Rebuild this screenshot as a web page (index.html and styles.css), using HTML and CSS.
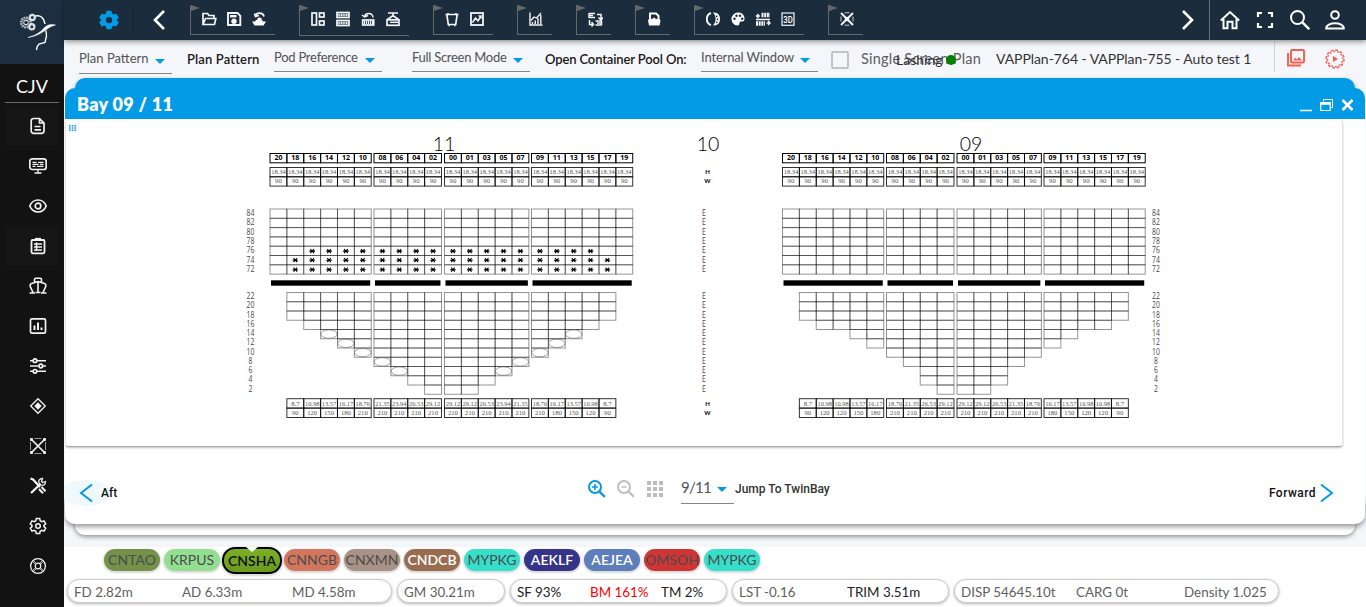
FILE: index.html
```html
<!DOCTYPE html>
<html lang="en">
<head>
<meta charset="utf-8">
<title>Bay 09 / 11</title>
<link rel="stylesheet" href="styles.css">
</head>
<body>
<div class="app">
  <aside class="side">
    <div class="logo">
      <svg width="64" height="64" viewBox="0 0 64 64" fill="none" stroke="#fff">
        <circle cx="26" cy="22.500" r="4.700" stroke="#aab0b6" stroke-width="2.800" stroke-dasharray="1.800 .6"/>
        <circle cx="32.300" cy="17.500" r="2.600" stroke="#dde0e3" stroke-width="2.200"/>
        <circle cx="31.800" cy="26.800" r="2.600" stroke="#dde0e3" stroke-width="2.200"/>
        <circle cx="26" cy="22.500" r="2.300" stroke="#fff" stroke-width="1"/>
        <path d="M35.500 16c5-1 8.500 1.500 9.500 8" stroke-width="1.400"/>
        <path d="M28 37.500c6-1.500 12-4.500 16-9.500 3-3 6.500-4.500 11.500-3-6 1.500-8.500 4.500-12 6.500-5 3.500-10 5-15.500 6z" fill="#fff" stroke-width=".5"/>
        <path d="M46 30.500l.5 5.500-1.500 6.500-6 1.500-1.800 2.500-.7 3.500" stroke-width="1.400"/>
      </svg>
    </div>
    <div class="vessel">CJV</div>
    <nav class="side-nav">
      <a class="on"><svg viewBox="0 0 18 18"><path d="M4.500 1.500h6l4.500 4.500v8a2.300 2.300 0 0 1-2.300 2.300H4.500A2.300 2.300 0 0 1 2.200 14V3.800a2.300 2.300 0 0 1 2.300-2.300zM10.500 1.500V6H15M5.500 9.500h6M5.500 12.800h6.500"/></svg></a>
      <a><svg viewBox="0 0 18 18"><rect x=".8" y="1.800" width="16.400" height="10.700" rx="2.500"/><path d="M3.500 5.300h4M9 5.300h5.500M3.500 7.300h6M11 7.300h3.500M3.500 9.300h3M8 9.300h6.500M9 12.500V16M5.500 16h7" stroke-width="1.300"/></svg></a>
      <a><svg viewBox="0 0 18 18"><path d="M.8 9C4 1 14 1 17.200 9 14 17 4 17 .8 9z"/><circle cx="9" cy="9" r="2.800"/></svg></a>
      <a class="on"><svg viewBox="0 0 18 18"><rect x="2.500" y="3" width="13" height="13.300" rx="1.200" stroke-width="1.800"/><path d="M6 2.200h6" stroke-width="2.600"/><path d="M5 7h8M5 10h8M5 13h8M7.500 5.500V14" stroke-width="1.500"/></svg></a>
      <a><svg viewBox="0 0 18 18"><path d="M5.500 5V2.500q0-1.200 1.200-1.200h4.600q1.200 0 1.200 1.200V5M2.500 6.500L9 4.500l6.500 2c2 .7 1.500 2.500 1 3.500-.8 2-1.500 3.500-2.500 5.300M2.500 6.500c-2 .7-1.500 2.500-1 3.500.8 2 1.500 3.500 2.500 5.300M9 4.500V15M.5 16h5.500M6.500 15.500h5M12 16h5.500" stroke-width="1.600"/></svg></a>
      <a><svg viewBox="0 0 18 18"><rect x="1.500" y="1.800" width="15" height="14.400" rx="1.500"/><path d="M5.500 8.500V13M9 5.500V13M12.500 10.500V13" stroke-width="2"/></svg></a>
      <a><svg viewBox="0 0 18 18"><path d="M1 3.700h3M8 3.700h9M1 9h8.500M14 9h3M1 14.300h3M8 14.300h9" stroke-width="1.400"/><circle cx="6" cy="3.700" r="1.800"/><circle cx="11.800" cy="9" r="1.800"/><circle cx="6" cy="14.300" r="1.800"/></svg></a>
      <a><svg viewBox="0 0 18 18"><path d="M9 1.700L16.300 9 9 16.300 1.700 9z" stroke-width="1.300"/><path d="M9 6.500L11.500 9 9 11.500 6.500 9z" fill="#fff"/></svg></a>
      <a><svg viewBox="0 0 18 18"><path d="M2 2l14 14M16 2L2 16" stroke-width="1.700"/><path d="M1.500 5v8M16.500 5v8M5.500 1.500h7M5.500 16.500h7" stroke-width="1" stroke="#999"/><path d="M1 2.500h3M2.500 1v3M14 2.500h3M15.500 1v3M1 15.500h3M2.500 14v3M14 15.500h3M15.500 14v3" stroke-width="1.800"/></svg></a>
      <a><svg viewBox="0 0 18 18"><path d="M1.500 1.500l2.500 1L11 10M2 16l9.500-9" stroke-width="2.300"/><path d="M16.500 4.500l-3 1-1-1 1-3c-3 0-4.500 2-3.500 4.500l2 2c2.500 1 4.500-.5 4.500-3.500z" stroke-width="1.300"/><path d="M10 12l4 4.200M12.500 10l4 4.200" stroke-width="2"/></svg></a>
      <a><svg viewBox="0 0 18 18"><path d="M7.300 1.500h3.400l.5 2.200 1.600.9 2.200-.7 1.700 3-1.700 1.500v1.200l1.700 1.500-1.700 3-2.200-.7-1.600.9-.5 2.200H7.300l-.5-2.200-1.600-.9-2.200.7-1.700-3L3 9.600V8.400L1.300 6.900l1.700-3 2.200.7 1.600-.9z" stroke-width="1.500"/><circle cx="9" cy="9" r="2.300" stroke-width="1.500"/></svg></a>
      <a><svg viewBox="0 0 18 18"><circle cx="9" cy="9" r="7.400" stroke-width="1.300"/><circle cx="9" cy="9" r="2.800" stroke-width="1.200"/><path d="M3.800 4.600l3 3M4.600 3.800l3 3M14.200 4.600l-3 3M13.400 3.800l-3 3M3.800 13.400l3-3M4.600 14.200l3-3M14.200 13.400l-3-3M13.400 14.200l-3-3" stroke-width=".8"/></svg></a>
    </nav>
  </aside>

  <main class="main">
    <header class="topbar">
      <div class="gear"><svg width="20" height="20" viewBox="0 0 24 24" fill="#039be5"><path fill-rule="evenodd" d="M9 1h6l.7 3.300 2 1.100 3.200-1 2.900 5-2.400 2.200v1l2.400 2.200-2.900 5-3.200-1-2 1.100L15 23H9l-.7-3.100-2-1.100-3.200 1-2.900-5 2.400-2.200v-1L.2 9.400l2.900-5 3.200 1 2-1.100zM12 8.300a3.800 3.800 0 1 0 0 7.600 3.800 3.800 0 0 0 0-7.600z"/></svg></div>
      <svg class="prev" width="14" height="20" viewBox="0 0 14 20" fill="none" stroke="#fff" stroke-width="2.600"><path d="M12 1L3 10l9 9"/></svg>
      <div class="tools">
        <div class="tool-group">
          <svg viewBox="0 0 16 16"><path d="M2 13.500v-11h4.500l1.500 2h5v2.500M2 13.500L4.500 7.500h10.300l-1.300 6z"/></svg>
          <svg viewBox="0 0 16 16"><path d="M2 2h9.500l2.800 2.800V14H2z" stroke-width="1.900"/><path d="M4 5.200h6.500" stroke-width="2.400"/><circle cx="8" cy="10.300" r="1.900" fill="#fff"/></svg>
          <svg viewBox="0 0 16 16"><path d="M4.500 5C5.500 1.200 12 1.200 13 5.500M8 4.500L4.500 5.500 3.500 2.500"/><path d="M5 9h6l1 1.500h3l-2.500 4h-9L1 10.500h3z" fill="#fff" stroke="none"/><circle cx="8.500" cy="8.800" r="2.300" fill="#fff" stroke="none"/></svg>
        </div>
        <div class="tool-group tall">
          <svg viewBox="0 0 16 16"><rect x="2" y="2" width="4.500" height="12"/><rect x="9.500" y="2" width="4.500" height="4"/><rect x="9.500" y="10" width="4.500" height="4"/></svg>
          <svg viewBox="0 0 16 16"><rect x="2" y="1.500" width="12" height="5"/><rect x="2" y="9.500" width="12" height="5"/><path d="M2.500 4h11M2.500 12h11" stroke-width="2.600" stroke-dasharray="1.200 .5"/></svg>
          <svg viewBox="0 0 16 16"><path d="M4.500 6C5 1.500 12.500 1 13 6.500M2 4l2.500 2L8 4.500" stroke-width="1.500"/><rect x="2.700" y="9" width="11" height="5"/><path d="M4 11.500h9" stroke-width="3" stroke-dasharray="1.200 .8"/></svg>
          <svg viewBox="0 0 16 16"><path d="M3 2h10M8 2v3M2.500 8.500L8 4.500l5.500 4"/><rect x="2" y="8.800" width="12" height="5.500"/><path d="M5 11.300h8" stroke-width="1.500"/></svg>
        </div>
        <div class="tool-group">
          <svg viewBox="0 0 16 16"><path d="M1.500 3.500h13M2.800 3.500L4.300 13.500h7.400l1.500-10M4.500 14.300h1.500M10 14.300h1.500M4 3V2M12 3V2"/></svg>
          <svg viewBox="0 0 16 16"><rect x="2" y="2" width="12" height="12" stroke-width="1.800"/><path d="M3.500 11.500L6.500 7l2.500 3L12 5M9.500 5H12v2.500" stroke-width="1.500"/></svg>
        </div>
        <div class="tool-group">
          <svg viewBox="0 0 16 16"><path d="M2 1.500V14h12.500M4.500 13v-2M7.300 13V9.500M10 13V7M12.800 13V4" stroke-width="1.400"/><path d="M3 9.500L6 6l2.500 1L13 2" stroke-width="1.300"/></svg>
        </div>
        <div class="tool-group">
          <svg viewBox="0 0 16 16"><path d="M2 2.500h6M2 4.500h4M2 6.500h6M2 2v5M10 3.500h4V8M11.500 6.500L14 9l2-2.500M8.500 10h6M10 12h4M8.500 14h6M14.500 9.500v5M2.500 9v4.500h4M4.500 11l2 2.500-2 2" stroke-width="1.500"/></svg>
        </div>
        <div class="tool-group">
          <svg viewBox="0 0 16 16"><path fill-rule="evenodd" stroke="none" fill="#fff" d="M3 1.500h7.500l3 3V8l1 1.500-1 5H3l-1-5L3 8zm2 2v4.500h1l2-1.500L10 8h1.500V5.200L9.700 3.500z"/></svg>
        </div>
        <div class="tool-group">
          <svg viewBox="0 0 16 16"><path d="M6 2C.5 3.500.5 12.500 6 14" stroke-width="1.900"/><path fill-rule="evenodd" d="M8 1.500c6-.5 7 4 7 6.500s-1 7-7 6.500c3.500-3.500 3.500-9.500 0-13zm3.700 3a.8.800 0 1 0 .1 0zm.8 3a.8.800 0 1 0 .1 0zm-.8 3a.8.800 0 1 0 .1 0z" fill="#fff" stroke="none"/></svg>
          <svg viewBox="0 0 16 16"><path fill="#fff" stroke="none" d="M8 1.500A6.500 6.500 0 0 0 1.500 8c0 3.500 2.500 6.500 6 6.500 3 0 1-3 3-4h2.500c3-1 2-9-5-9z"/><g fill="#1b2c3d" stroke="none"><circle cx="4.500" cy="7.800" r="1.200"/><circle cx="6.500" cy="4.700" r="1.200"/><circle cx="10" cy="4.700" r="1.200"/><circle cx="12.200" cy="7.800" r="1.200"/></g></svg>
          <svg viewBox="0 0 16 16"><path d="M6.500 4H15M1 12.500h9" stroke-width="4.500" stroke-dasharray="2 .7"/><path d="M1 5h4M3.500 3L1.500 5l2 2M1 8.500h14M11.500 12h4M13 10l2 2-2 2" stroke-width="1.400"/></svg>
          <svg viewBox="0 0 16 16"><rect x="2" y="2" width="12" height="12.300" stroke-width="1.200"/><text x="8" y="11.500" font-family="Roboto" font-weight="500" font-size="9" fill="#fff" stroke="none" text-anchor="middle" textLength="9.500" lengthAdjust="spacingAndGlyphs">3D</text></svg>
        </div>
        <div class="tool-group">
          <svg viewBox="0 0 16 16"><path d="M2 2l12 12M14 2L2 14" stroke-width="1.900"/><circle cx="8" cy="8" r="2.300" fill="#fff" stroke="none"/><path d="M2 5.500v5M14 5.500v5M5.500 1.800h5M5.500 14.200h5" stroke-width=".8"/></svg>
        </div>
      </div>
      <svg class="next" width="14" height="20" viewBox="0 0 14 20" fill="none" stroke="#fff" stroke-width="2.600"><path d="M2 1l9 9-9 9"/></svg>
      <div class="user-tools">
        <svg width="20" height="20" viewBox="0 0 20 20"><path d="M.8 10.500L10 2l9.200 8.500M3.500 9v9.200h4v-6.500h5v6.500h4V9" stroke-width="2"/></svg>
        <svg width="20" height="20" viewBox="0 0 20 20"><path d="M3 7V3h4M13 3h4v4M17 13v4h-4M7 17H3v-4" stroke-width="2.200"/></svg>
        <svg width="20" height="20" viewBox="0 0 20 20"><circle cx="7.500" cy="7.500" r="6.500" stroke-width="2"/><path d="M12.200 12.200l7 7" stroke-width="2.400"/></svg>
        <svg width="20" height="20" viewBox="0 0 20 20"><circle cx="10" cy="5" r="3.800" stroke-width="2"/><path d="M1.200 18.500c0-7 17.600-7 17.600 0z" stroke-width="2"/></svg>
      </div>
    </header>

    <section class="filters">
      <div class="select s-plan"><span>Plan Pattern</span><i></i></div>
      <b class="lab l-plan">Plan Pattern</b>
      <div class="select s-pod"><span>Pod Preference</span><i></i></div>
      <div class="select s-full"><span>Full Screen Mode</span><i></i></div>
      <b class="lab l-pool">Open Container Pool On:</b>
      <div class="select s-win"><span>Internal Window</span><i></i></div>
      <span class="check"></span>
      <div class="single"><span>Single Screen Plan</span><div class="lashing"><span>Lashing</span><i></i></div></div>
      <span class="plan-name">VAPPlan-764 - VAPPlan-755 - Auto test 1</span>
      <div class="right-icons">
        <svg width="18" height="18" viewBox="0 0 18 18" fill="none" stroke="#f44336"><rect x="4" y="1" width="13" height="12.500" rx="1" stroke-width="1.900"/><path d="M1 4v12.500h13" stroke-width="1.900"/><path d="M6 11.500l2.500-3 1.500 2 2-2.500 3 3.500z" fill="#f44336" stroke="none"/></svg>
        <svg width="20" height="20" viewBox="0 0 20 20" fill="none" stroke="#f44336"><circle cx="10" cy="10" r="9" stroke-width="1.500" stroke-dasharray="2.700 2.012"/><circle cx="10" cy="10" r="7.600" stroke-width="1.300" stroke-dasharray="1.990 1.989" stroke-dashoffset="-2"/><path d="M8 7l5 3-5 3z" fill="#f44336" stroke="none"/></svg>
      </div>
    </section>

    <section class="stage">
      <div class="win-back"></div>
      <div class="win">
        <div class="win-head">
          <h1>Bay 09 / 11</h1>
          <div class="win-btns">
            <svg width="12" height="14" viewBox="0 0 12 14"><path d="M0 12.500h12" stroke-width="1.700"/></svg>
            <svg width="13" height="14" viewBox="0 0 13 14"><path d="M3.500 3.500V1.500h9v8h-2" stroke-width="1"/><path d="M.7 4.500h9.500v8H.7z" stroke-width="1.200"/><path d="M.7 5.500h9.500" stroke-width="2.500"/></svg>
            <svg width="13" height="14" viewBox="0 0 13 14"><path d="M1.500 2l10 10M11.500 2l-10 10" stroke-width="2.700"/></svg>
          </div>
        </div>
        <div class="plan"><svg id="bay" width="1276" height="327" viewBox="66 119 1276 327"></svg></div>
        <div class="win-foot">
          <div class="aft"><svg width="14" height="20" viewBox="0 0 14 20" fill="none" stroke="#039be5" stroke-width="2"><path d="M13 1.500L2 10l11 8.500"/></svg><b>Aft</b></div>
          <div class="zoomers">
            <svg width="20" height="20" viewBox="0 0 20 20" fill="none" stroke="#0b97dd"><circle cx="8" cy="8" r="6" stroke-width="2"/><path d="M12.300 12.300l5.500 5.500" stroke-width="2.400"/><path d="M8 5v6M5 8h6" stroke-width="1.600"/></svg>
            <svg width="20" height="20" viewBox="0 0 20 20" fill="none" stroke="#bdbdbd"><circle cx="8" cy="8" r="6" stroke-width="1.900"/><path d="M12.300 12.300l5.500 5.500" stroke-width="2.300"/><path d="M5.500 8h5" stroke-width="1.500"/></svg>
            <svg width="16" height="16" viewBox="0 0 16 16" stroke="#bdbdbd" stroke-width="4"><path d="M0 2h16M0 8h16M0 14h16" stroke-dasharray="4 2"/></svg>
          </div>
          <div class="select s-bay"><span>9/11</span><i></i></div>
          <b class="jump">Jump To TwinBay</b>
          <div class="fwd"><b>Forward</b><svg width="14" height="20" viewBox="0 0 14 20" fill="none" stroke="#039be5" stroke-width="2"><path d="M1 1.500L12 10 1 18.500"/></svg></div>
        </div>
      </div>
    </section>

    <footer class="foot">
      <div class="chips">
        <span class="chip olive">CNTAO</span><span class="chip lime">KRPUS</span><span class="chip current">CNSHA</span><span class="chip coral">CNNGB</span><span class="chip taupe">CNXMN</span><span class="chip brown light">CNDCB</span><span class="chip teal">MYPKG</span><span class="chip navy light">AEKLF</span><span class="chip blue light">AEJEA</span><span class="chip red">OMSOH</span><span class="chip teal">MYPKG</span>
      </div>
      <div class="stats">
        <div class="stat draft"><span>FD 2.82m</span><span>AD 6.33m</span><span>MD 4.58m</span></div>
        <div class="stat gm"><span>GM 30.21m</span></div>
        <div class="stat stress"><span class="dark">SF 93%</span><span class="alert">BM 161%</span><span class="dark">TM 2%</span></div>
        <div class="stat trim"><span>LST -0.16</span><span class="dark">TRIM 3.51m</span></div>
        <div class="stat load"><span>DISP 54645.10t</span><span>CARG 0t</span><span>Density 1.025</span></div>
      </div>
    </footer>
  </main>
</div>
<script src="bay.js"></script>
</body>
</html>
```

FILE: styles.css
```css
* { box-sizing: border-box; }
body { margin: 0; font-family: Lato, "Open Sans", sans-serif; color: #333; background: #fff; overflow: hidden; }
svg { display: block; flex: none; }
.app { display: flex; width: 1366px; height: 607px; }

.side { width: 64px; flex: none; background: #121212; }
.logo { height: 64px; background: #1c2e40; }
.vessel { height: 39px; margin: 0 5px; padding-top: 11px; border-bottom: 1px solid #666c72; color: #fff; font-size: 18px; line-height: 22px; text-align: center; }
.side-nav { margin: 3px 5px 0; }
.side-nav a { display: flex; height: 40px; align-items: center; justify-content: center; padding-left: 12px; }
.side-nav a.on { background: #161616; }
.side-nav svg { width: 18px; height: 18px; fill: none; stroke: #f2f2f2; stroke-width: 1.7; }

.main { flex: 1; min-width: 0; display: flex; flex-direction: column; background: #f5f6f9; }
.topbar { height: 40px; flex: none; display: flex; align-items: center; background: #1b2c3d; box-shadow: 0 2px 5px rgba(0,0,0,.4); z-index: 2; }
.gear { width: 70px; height: 32px; padding: 6px 0 0 35px; border-right: 1px solid #17222e; }
.prev { margin-left: 18px; }
.tools { display: flex; align-items: flex-start; gap: 24px; height: 30px; margin-left: 24px; }
.tool-group { position: relative; display: flex; gap: 9px; height: 30px; padding: 6px 8.500px 0 9.500px; border-left: 1px solid #686868; border-bottom: 1px solid #686868; }
.tool-group.tall { height: 31px; }
.tool-group::before { content: ""; position: absolute; left: 0; top: 0; border-left: 9px solid #666; border-top: 3px solid transparent; border-bottom: 3px solid transparent; }
.tool-group svg { width: 16px; height: 16px; fill: none; stroke: #f4f6f8; stroke-width: 1.7; }
.next { margin-left: 318px; }
.user-tools { display: flex; align-items: center; gap: 15px; height: 40px; margin-left: 14px; padding-left: 10px; border-left: 1px solid #68727c; }
.user-tools svg { fill: none; stroke: #fff; }

.filters { display: flex; height: 38px; flex: none; padding-left: 15px; }
.select { display: flex; flex: none; justify-content: space-between; border-bottom: 1px solid #868686; font-size: 13px; line-height: 16px; color: #505356; white-space: nowrap; }
.select i { width: 0; height: 0; border: 5px solid transparent; border-top-color: #039be5; border-bottom: 0; }
.filters .select { height: 32px; padding-top: 9px; }
.filters .select i { margin: 9px 7px 0 0; }
.filters .s-plan { width: 93px; height: 34px; padding-top: 10px; }
.s-pod { width: 108px; margin-left: 15px; letter-spacing: -.25px; }
.s-full { width: 118px; margin-left: 30px; letter-spacing: -.28px; }
.s-win { width: 117px; margin-left: 14px; letter-spacing: -.15px; }
.filters .s-win i { margin-right: 8px; }
.lab { font-size: 13px; line-height: 16px; padding-top: 11px; color: #181818; font-weight: 600; white-space: nowrap; flex: none; }
.l-plan { width: 72px; margin-left: 15px; letter-spacing: .15px; }
.l-pool { width: 142px; margin-left: 15px; letter-spacing: -.13px; }
.check { flex: none; width: 18px; height: 18px; margin: 11px 0 0 13px; border: 2px solid #c2c3c5; border-radius: 2px; }
.single { position: relative; flex: none; width: 121px; margin-left: 12px; padding-top: 10px; font-size: 14.500px; line-height: 18px; letter-spacing: .23px; white-space: nowrap; color: #5a5d60; }
.lashing { position: absolute; left: 35px; top: 11px; display: flex; align-items: center; color: #333; font-size: 14px; letter-spacing: 0; }
.lashing span { width: 50px; }
.lashing i { width: 10px; height: 10px; border-radius: 50%; background: #008000; }
.plan-name { flex: none; width: 278px; margin-left: 14px; padding-top: 10px; font-size: 14px; line-height: 17px; letter-spacing: -.06px; white-space: nowrap; }
.right-icons { display: flex; gap: 20px; height: 30px; margin-top: 2px; padding: 7px 0 0 12px; border-left: 1px solid #ccced1; opacity: .85; }

.stage { position: relative; height: 469px; flex: none; }
.win-back { position: absolute; left: 11px; top: 0; width: 1280px; height: 457px; border-radius: 10px; background: linear-gradient(#039be5 30px, #fff 30px); box-shadow: 0 2px 4px rgba(0,0,0,.4); }
.win { position: absolute; z-index: 2; left: 1px; top: 10px; width: 1300px; height: 436px; border-radius: 10px; overflow: hidden; background: #fff; display: flex; flex-direction: column; }
.stage::before { content: ""; position: absolute; z-index: 1; left: 1px; top: 420px; width: 1300px; height: 26px; border-radius: 0 0 10px 10px; box-shadow: 0 3px 5px rgba(0,0,0,.38); }
.win-head { display: flex; justify-content: space-between; height: 31px; flex: none; padding: 0 11px 0 12px; background: #039be5; color: #fff; }
.win-head h1 { margin: 0; padding-top: 5px; font-size: 18px; line-height: 22px; font-weight: 800; letter-spacing: .3px; }
.win-btns { display: flex; gap: 8px; padding-top: 10px; }
.win-btns svg { fill: none; stroke: #fff; }
.plan { width: 1278px; height: 328px; flex: none; border-radius: 4px; border: 1px solid #e3e3e3; border-top: 0; border-bottom-color: #aaa; box-shadow: 0 1px 2px rgba(0,0,0,.25); }
.plan text { font-family: Lato, sans-serif; }
.plan .serif { font-family: "Liberation Serif", serif; fill: #555; }
.plan .bold { font-family: "Open Sans", sans-serif; font-weight: 700; }
.plan .axis { font-family: "Open Sans", sans-serif; font-size: 8.500px; fill: #444; }
.win-foot { display: flex; flex: 1; font-size: 12px; }
.win-foot b { font-family: Roboto, "Open Sans", sans-serif; font-weight: 500; color: #111; white-space: nowrap; }
.aft { display: flex; align-items: center; gap: 8px; width: 508px; height: 40px; margin-top: 26px; padding-left: 14px; background: radial-gradient(ellipse 26px 13px at 21px 20px, #eef8fd 96%, transparent); }
.zoomers { display: flex; gap: 9px; padding: 32px 0 0 14px; width: 108px; }
.zoomers svg:nth-child(3) { margin: 2px 0 0 2px; }
.s-bay { width: 53px; height: 25px; margin-top: 32px; font-size: 15px; line-height: 16px; letter-spacing: -.7px; }
.s-bay { height: 25px; }
.s-bay i { margin: 8px 7px 0 0; }
.win-foot .jump { margin: 35px 0 0 1px; line-height: 15px; color: #333; }
.fwd { display: flex; align-items: center; gap: 4px; margin: 26px 31px 0 auto; height: 40px; }
.fwd b { letter-spacing: .45px; }

.foot { flex: 1; background: #fff; }
.chips { display: flex; align-items: center; gap: 4px; height: 26px; padding-left: 40px; }
.chip { position: relative; display: flex; justify-content: center; width: 56px; height: 22px; border-radius: 11px; font-size: 14px; line-height: 22px; color: #4c4c4c; box-shadow: 0 1px 2px 1px rgba(0,0,0,.15); white-space: nowrap; }
.chip.light { color: #fff; font-weight: 600; }
.chip.current { width: 60px; height: 27px; margin: 0 -2px; border: 2px solid #000; border-radius: 13px; background: linear-gradient(#7bb026, #6b9a1d); line-height: 24px; color: #111; font-weight: 600; z-index: 1; }
.chip.current::before { content: ""; position: absolute; left: 22px; top: -2px; border: 6px solid transparent; border-top: 5px solid #fff; border-bottom: 0; }
.olive { background: #75924a; }
.lime { background: #93df92; }
.coral { background: #d2775e; }
.taupe { background: #a89386; }
.brown { background: #996c50; }
.teal { background: #36dfc9; }
.navy { background: #353489; }
.blue { background: #5e7dbb; }
.red { background: #d03535; }
.stats { display: flex; gap: 5px; padding: 6px 0 0 3px; }
.stat { display: grid; height: 24px; padding-left: 6px; border: 1px solid #ccc; border-radius: 12px; background: #fff; font-size: 13.400px; line-height: 24px; color: #606060; box-shadow: 0 1px 3px rgba(0,0,0,.3); white-space: nowrap; }
.draft { width: 325px; grid-template-columns: 108px 110px 1fr; }
.gm { width: 108px; }
.stress { width: 217px; grid-template-columns: 73px 71px 1fr; }
.trim { width: 217px; grid-template-columns: 108px 1fr; }
.load { width: 325px; grid-template-columns: 115px 108px 1fr; }
.stat .dark { color: #222; }
.stat .alert { color: #f00; }
```

FILE: bay.js
```js
const svg = document.getElementById("bay");
const NS = "http://www.w3.org/2000/svg";
function add(tag, attrs, text) {
  const el = document.createElementNS(NS, tag);
  for (const k in attrs) el.setAttribute(k, attrs[k]);
  if (text !== undefined) el.textContent = text;
  svg.appendChild(el);
}
const CW = 16.87, RH = 9.3;
const groups = [[0, 6], [104, 4], [174.500, 5], [261.500, 6]];
const colX = [];
groups.forEach(([x, n]) => { for (let i = 0; i < n; i++) colX.push(x + i * CW); });
const heads = "20 18 16 14 12 10 08 06 04 02 00 01 03 05 07 09 11 13 15 17 19".split(" ");
const upper = [84, 82, 80, 78, 76, 74, 72];
const lower = [22, 20, 18, 16, 14, 12, 10, 8, 6, 4, 2];
const bays = [
  { x: 270, name: "11", nameX: 444, labelX: 250.500, stars: { 76: [2, 18], 74: [1, 19], 72: [1, 19] }, oval: true,
    hold: [[1, 19], [1, 19], [1, 19], [2, 18], [3, 17], [4, 16], [5, 15], [6, 14], [7, 13], [8, 12], [9, 11]],
    h: "8.7 10.98 13.57 16.17 18.76 21.35 23.94 26.53 29.12 29.12 29.12 26.53 23.94 21.35 18.76 16.17 13.57 10.98 8.7",
    w: "90 120 150 180 210 210 210 210 210 210 210 210 210 210 210 180 150 120 90" },
  { x: 782.500, name: "09", nameX: 971, labelX: 1156, stars: {}, oval: false,
    hold: [[1, 19], [1, 19], [1, 19], [2, 18], [4, 16], [5, 15], [6, 14], [7, 13], [8, 12], [8, 12], [9, 11]],
    h: "8.7 10.98 10.98 13.57 16.17 18.76 21.35 26.53 29.12 29.12 29.12 26.53 21.35 18.76 16.17 13.57 10.98 10.98 8.7",
    w: "90 120 120 150 180 210 210 210 210 210 210 210 210 210 180 150 120 120 90" }
];
function cell(x, y, h, stroke) {
  add("rect", { x, y, width: CW, height: h, fill: "none", stroke, "stroke-width": 1 });
}
const SLOT = "rgba(0,0,0,.42)", HEAD = "#000", VALUE = "rgba(0,0,0,.8)";
function value(x, y, t) {
  const a = { x: x + CW / 2, y, "font-size": 6.700, "text-anchor": "middle", class: "serif" };
  if (t.length > 4) { a.textLength = 14.500; a.lengthAdjust = "spacingAndGlyphs"; }
  add("text", a, t);
}
function axis(x, y, t) {
  const s = String(t);
  add("text", { x, y, "text-anchor": "middle", class: "axis", textLength: s === "E" ? 3.800 : s.length * 3.900, lengthAdjust: "spacingAndGlyphs" }, s);
}
bays.forEach(b => {
  add("text", { x: b.nameX, y: 151, "font-size": 19.500, "font-weight": 300, "text-anchor": "middle" }, b.name);
  heads.forEach((t, i) => {
    const x = b.x + colX[i];
    cell(x, 153.500, 9.300, HEAD);
    add("text", { x: x + CW / 2, y: 160.300, "font-size": 7, "text-anchor": "middle", class: "bold" }, t);
    cell(x, 167.500, 9.300, VALUE);
    cell(x, 176.800, 9.300, VALUE);
    value(x, 174.300, "18.34");
    value(x, 183.300, "90");
  });
  upper.forEach((n, r) => {
    const y = 209 + r * RH;
    heads.forEach((t, i) => cell(b.x + colX[i], y, RH, SLOT));
    axis(b.labelX, y + 7, n);
    const s = b.stars[n];
    if (s) for (let i = s[0]; i <= s[1]; i++) {
      const cx = b.x + colX[i] + CW / 2, cy = y + 4.900 - r % 2 * .2;
      add("path", { d: `M${cx - 2.8} ${cy}h5.600M${cx - 1.8} ${cy - 2}l3.600 4M${cx + 1.8} ${cy - 2}l-3.600 4`, stroke: "#000", "stroke-width": 1.05 });
    }
  });
  groups.forEach(([x, n]) => add("rect", { x: b.x + x + 1, y: 280.300, width: n * CW - 2, height: 5.400, fill: "#000" }));
  lower.forEach((n, r) => {
    const y = 292.500 + r * 9.250, [s, e] = b.hold[r];
    for (let i = s; i <= e; i++) {
      cell(b.x + colX[i], y, 9.250, SLOT);
      if (b.oval && r > 3 && r < 9 && (i === s || i === e))
        add("ellipse", { cx: b.x + colX[i] + CW / 2, cy: y + 4.600, rx: 8.200, ry: 4.200, fill: "none", stroke: "#666", "stroke-width": .6 });
    }
    axis(b.labelX, y + 6.700, n);
  });
  const hs = b.h.split(" "), ws = b.w.split(" ");
  hs.forEach((t, k) => {
    const x = b.x + colX[k + 1];
    cell(x, 398.700, 9.400, VALUE);
    cell(x, 408.100, 9.400, VALUE);
    value(x, 405.500, t);
    value(x, 414.700, ws[k]);
  });
});
add("text", { x: 708, y: 151, "font-size": 19.500, "font-weight": 300, "text-anchor": "middle" }, "10");
[[174.200, "H"], [183.200, "W"], [405.500, "H"], [414.500, "W"]].forEach(([y, t]) =>
  add("text", { x: 707.500, y, "font-size": 6, "font-weight": 700, "text-anchor": "middle" }, t));
upper.forEach((n, r) => axis(704, 216 + r * RH, "E"));
lower.forEach((n, r) => axis(704, 299.200 + r * 9.250, "E"));
for (let r = 0; r < 3; r++) for (let c = 0; c < 3; c++)
  add("rect", { x: 69 + c * 2.700, y: 125 + r * 2.200, width: 1.700, height: 1.600, fill: "#25a5e6" });
```
